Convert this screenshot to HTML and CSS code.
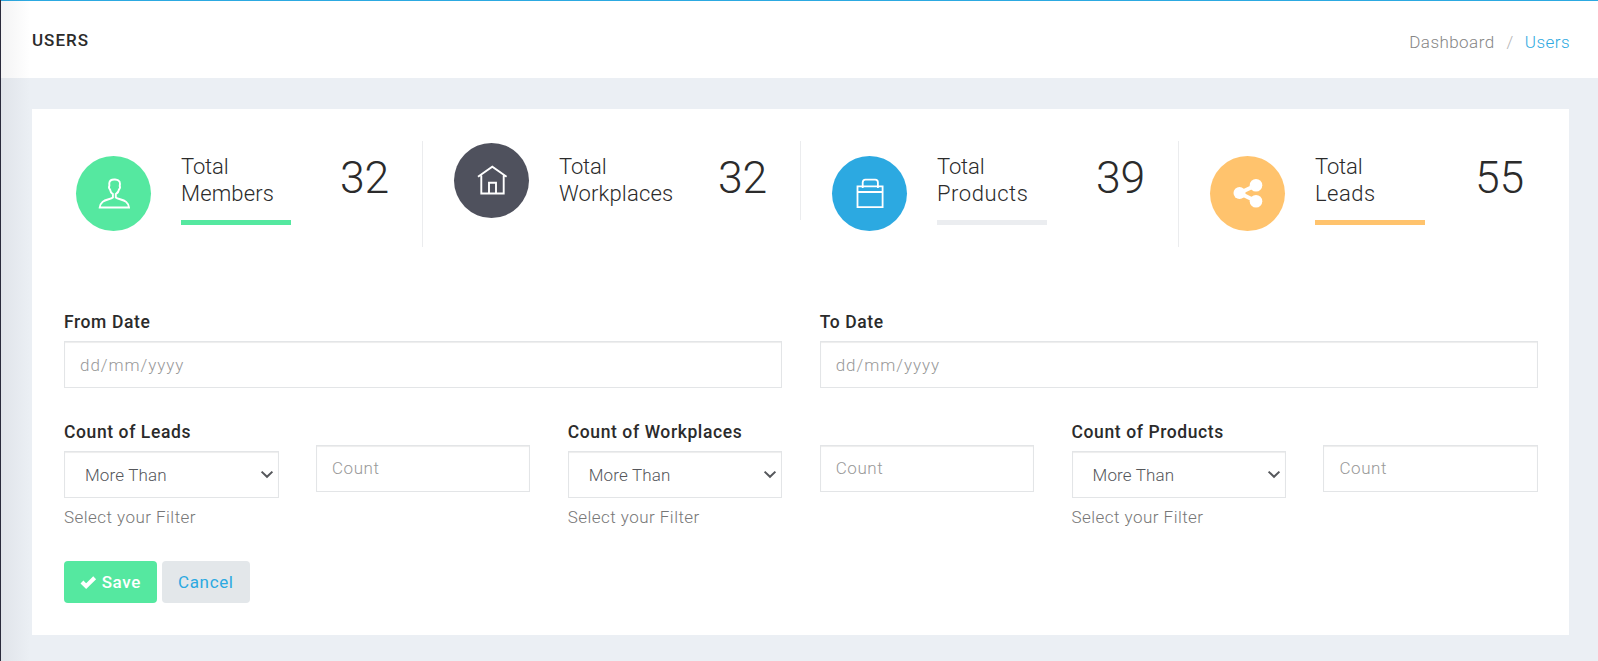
FILE: index.html
```html
<!DOCTYPE html>
<html lang="en">
<head>
<meta charset="utf-8">
<title>Users</title>
<link rel="stylesheet" href="styles.css">
</head>
<body>
<div class="sidebar-edge"></div>
<header class="topbar">
  <h1 class="title">USERS</h1>
  <nav class="crumbs"><a class="crumb">Dashboard</a><span class="sep">/</span><a class="crumb current">Users</a></nav>
</header>
<main class="card">
  <section class="stats">
    <div class="stat">
      <div class="disc green"><svg width="32" height="32" viewBox="0 0 32 32"><path d="M17 1.500C14 1.300 11.600 2.500 11.300 5C11.200 6.200 11.500 7 11.300 8C10.800 9 11.100 10.600 12 11.500C12.300 13.400 13.200 15 14.900 16.100V19.500C12.500 21.300 7.500 21.300 4.600 23.900C3 25.300 1.900 27 1.700 29.500H31C30.800 27 29.700 25.300 28.100 23.900C25.200 21.300 20.200 21.300 17.800 19.500V16.100C19.500 15 20.700 13.400 21 11.500C21.900 10.600 22.200 9 21.700 8C22.300 5 22.300 3.400 20.500 2.600C19.500 1.800 18.300 1.600 17 1.500Z" fill="none" stroke="#fff" stroke-width="1.900"/></svg></div>
      <div class="info"><h2 class="name members"><span class="total">Total</span><br><span>Members</span></h2><div class="bar green"></div></div>
      <div class="num">32</div>
    </div>
    <div class="stat">
      <div class="disc dark"><svg width="32" height="32" viewBox="0 0 32 32"><path d="M2 11.700 16.300 1.600 30.600 11.700M5.300 10.500V28.500H27.700V10.500M13 28V17.700H20V28" fill="none" stroke="#fff" stroke-width="1.900"/></svg></div>
      <div class="info"><h2 class="name workplaces"><span class="total">Total</span><br><span>Workplaces</span></h2></div>
      <div class="num">32</div>
    </div>
    <div class="stat">
      <div class="disc blue"><svg width="32" height="32" viewBox="0 0 32 32"><path d="M3.500 8.400H28.600V29.200H3.500ZM3.500 14H28.600M8.700 10V4.500Q8.700 1.700 11.400 1.700H21.200Q23.900 1.700 23.900 4.500V10" fill="none" stroke="#fff" stroke-width="1.800"/></svg></div>
      <div class="info"><h2 class="name products"><span class="total">Total</span><br><span>Products</span></h2><div class="bar gray"></div></div>
      <div class="num">39</div>
    </div>
    <div class="stat">
      <div class="disc orange"><svg width="32" height="32" viewBox="0 0 32 32"><g fill="#fff"><circle cx="7.500" cy="15" r="6"/><circle cx="24" cy="7.200" r="6.300"/><circle cx="24" cy="23.200" r="6.300"/></g><path d="M24 7.200 7.500 15 24 23.200" fill="none" stroke="#fff" stroke-width="4"/></svg></div>
      <div class="info"><h2 class="name leads"><span class="total">Total</span><br><span>Leads</span></h2><div class="bar orange"></div></div>
      <div class="num">55</div>
    </div>
  </section>
  <form class="form">
    <div class="row two">
      <div class="field"><label class="label"><span>From Date</span></label><input class="control date" placeholder="dd/mm/yyyy"></div>
      <div class="field"><label class="label"><span>To Date</span></label><input class="control date" placeholder="dd/mm/yyyy"></div>
    </div>
    <div class="row six">
      <div class="field"><label class="label"><span>Count of Leads</span></label>
        <div class="select"><select class="control pick"><option>More Than</option></select><svg class="chev" width="14" height="9" viewBox="0 0 14 9"><path d="M1.600 1.600 7 6.800 12.400 1.600" fill="none" stroke="#55575b" stroke-width="2"/></svg></div>
        <small class="help"><span>Select your Filter</span></small></div>
      <div class="field count"><input class="control" placeholder="Count"></div>
      <div class="field"><label class="label"><span>Count of Workplaces</span></label>
        <div class="select"><select class="control pick"><option>More Than</option></select><svg class="chev" width="14" height="9" viewBox="0 0 14 9"><path d="M1.600 1.600 7 6.800 12.400 1.600" fill="none" stroke="#55575b" stroke-width="2"/></svg></div>
        <small class="help"><span>Select your Filter</span></small></div>
      <div class="field count"><input class="control" placeholder="Count"></div>
      <div class="field"><label class="label"><span>Count of Products</span></label>
        <div class="select"><select class="control pick"><option>More Than</option></select><svg class="chev" width="14" height="9" viewBox="0 0 14 9"><path d="M1.600 1.600 7 6.800 12.400 1.600" fill="none" stroke="#55575b" stroke-width="2"/></svg></div>
        <small class="help"><span>Select your Filter</span></small></div>
      <div class="field count"><input class="control" placeholder="Count"></div>
    </div>
    <div class="actions">
      <button type="button" class="btn save"><svg width="17" height="14" viewBox="0 0 17 14"><path d="M2 7 6.300 11.200 15 2.700" fill="none" stroke="#fff" stroke-width="4.200"/></svg><span>Save</span></button>
      <button type="button" class="btn cancel"><span>Cancel</span></button>
    </div>
  </form>
</main>
</body>
</html>
```
FILE: styles.css
```css
* { box-sizing: border-box; }
body {
  margin: 0;
  height: 661px;
  overflow: hidden;
  background: #ebeff4;
  font-family: Roboto, "Liberation Sans", sans-serif;
  font-size: 17px;
  font-weight: 300;
  color: #2b2b2b;
}
.sidebar-edge {
  position: absolute;
  left: 0;
  top: 0;
  width: 30px;
  height: 661px;
  border-left: 1px solid #2b2b3c;
  background: linear-gradient(90deg, rgba(43,43,60,.055), rgba(43,43,60,.03) 45%, rgba(43,43,60,0));
}
.topbar {
  height: 78px;
  padding: 0 28px 0 32px;
  border-top: 1px solid #2ca9e1;
  background: #fff;
  display: flex;
  justify-content: space-between;
}
.title { margin: 27px 0 0; font-size: 17px; line-height: 24px; font-weight: 500; letter-spacing: 1px; }
.crumbs { margin-top: 29px; line-height: 24px; letter-spacing: .45px; color: #868686; }
.sep { margin: 0 11px 0 12px; color: #b5b5b5; }
.current { color: #2ca9e1; }
.card {
  margin: 31px 29px 0 32px;
  height: 526px;
  padding: 32px 12px 0 13px;
  background: #fff;
}
.stats { display: grid; grid-template-columns: repeat(4, 378px); height: 106px; align-items: start; }
.stat { height: 106px; padding: 0 33px 0 31px; display: flex; align-items: flex-start; border-right: 1px solid #ebecee; }
.stat:nth-child(2) { height: 79px; }
.stat:last-child { border-right: 0; }
.disc { width: 75px; height: 75px; margin-top: 15px; border-radius: 50%; display: flex; align-items: center; justify-content: center; flex: none; }
.stat:nth-child(2) .disc { margin-top: 2px; }
.green { background: #55e8a0; }
.dark { background: #4f515d; }
.blue { background: #2ca9e1; }
.gray { background: #ebedf0; }
.orange { background: #ffc36d; }
.info { margin-left: 30px; }
.name { margin: 12px 0 0; font-size: 22px; line-height: 27px; font-weight: 300; letter-spacing: .15px; }
.name .total { letter-spacing: -.15px; }
.products { letter-spacing: .55px; }
.leads { letter-spacing: .5px; }
.bar { width: 110px; height: 5px; margin-top: 13px; }
.num { margin: 11px 0 0 auto; font-size: 44.500px; line-height: 52px; letter-spacing: -.2px; }
.form { padding: 60px 19px 0 19px; }
.row { display: grid; column-gap: 37.300px; }
.two { grid-template-columns: repeat(2, 1fr); }
.six { grid-template-columns: repeat(6, 1fr); margin-top: 29px; }
.label { display: block; padding-top: 2px; margin-bottom: 5px; line-height: 27px; font-size: 17.500px; font-weight: 500; letter-spacing: .6px; }
.control {
  display: block;
  width: 100%;
  height: 47px;
  padding: 0 15px;
  border: 1px solid #e3e5e7;
  border-radius: 0;
  background: #fff;
  box-shadow: inset 0 1px 1px rgba(0,0,0,.075);
  font: inherit;
  letter-spacing: .6px;
  color: #55575b;
}
.control::placeholder { color: #999; opacity: 1; }
.date { letter-spacing: .95px; }
.pick { appearance: none; padding-left: 20px; letter-spacing: .15px; }
.select { position: relative; }
.chev { position: absolute; right: 5px; top: 19px; }
.count { padding-top: 28px; }
.count .control { padding-bottom: 2px; }
.help { display: block; margin-top: 7px; font-size: 17px; line-height: 24px; color: #777; letter-spacing: .46px; }
.actions { display: flex; gap: 5px; margin-top: 32px; }
.btn { height: 42px; padding: 0 16px; border: 0; border-radius: 4px; font: inherit; font-weight: 400; display: flex; align-items: center; letter-spacing: .65px; }
.save { width: 93px; background: #55e8a0; color: #fff; font-weight: 500; gap: 5px; }
.cancel { width: 88px; background: #e3e7ea; color: #2ca9e1; }
```
